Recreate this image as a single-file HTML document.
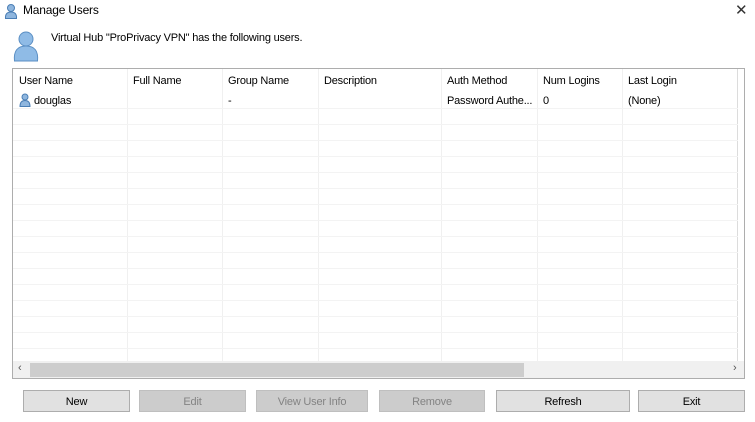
<!DOCTYPE html><html><head><style>
body{margin:0;width:755px;height:422px;background:#fff;font-family:"Liberation Sans",sans-serif;font-size:11px;color:#000;position:relative;overflow:hidden;letter-spacing:-0.2px}
.a{position:absolute}
.lv{left:12px;top:68px;width:731px;height:309px;border:1px solid #adadad;overflow:hidden}
.vl{position:absolute;top:0;height:292px;width:1px;background:#f0f0f0}
.hl{position:absolute;left:0;width:725px;height:1px;background:#f3f3f3}
.t{position:absolute;white-space:nowrap}
.b{position:absolute;top:390px;height:22px;border:1px solid #adadad;background:#e1e1e1;text-align:center;line-height:22px;box-sizing:border-box;font-size:11px}
.d{background:#cccccc;color:#838383;border-color:#bfbfbf}
</style></head><body>
<svg class="a" style="left:4px;top:3px" width="14" height="16" viewBox="0 0 14 16"><circle cx="7" cy="5" r="3.5" fill="#8fb6de" stroke="#4a7eb5"/><path d="M1.5 15.5 Q1 9 7 9 Q13 9 12.5 15.5Z" fill="#8fb6de" stroke="#4a7eb5"/></svg>
<div class="t" style="left:23px;top:3px;font-size:12px">Manage Users</div>
<div class="t" style="left:735px;top:1px;font-size:15px;color:#333">✕</div>
<svg class="a" style="left:13px;top:30px" width="26" height="32" viewBox="0 0 26 32"><circle cx="13" cy="9" r="7" fill="#8fbbe6" stroke="#5b8fc4"/><path d="M1.5 31 Q0 16 13 16 Q26 16 24.5 31Z" fill="#8fbbe6" stroke="#5b8fc4"/></svg>
<div class="t" style="left:51px;top:32px">Virtual Hub "ProPrivacy VPN" has the following users.</div>
<div class="a lv">
<div class="vl" style="left:114px"></div><div class="vl" style="left:209px"></div><div class="vl" style="left:305px"></div><div class="vl" style="left:428px"></div><div class="vl" style="left:524px"></div><div class="vl" style="left:609px"></div><div class="vl" style="left:724px;background:#dcdcdc"></div>
<div class="hl" style="top:39px"></div><div class="hl" style="top:55px"></div><div class="hl" style="top:71px"></div><div class="hl" style="top:87px"></div><div class="hl" style="top:103px"></div><div class="hl" style="top:119px"></div><div class="hl" style="top:135px"></div><div class="hl" style="top:151px"></div><div class="hl" style="top:167px"></div><div class="hl" style="top:183px"></div><div class="hl" style="top:199px"></div><div class="hl" style="top:215px"></div><div class="hl" style="top:231px"></div><div class="hl" style="top:247px"></div><div class="hl" style="top:263px"></div><div class="hl" style="top:279px"></div>
<div class="t" style="left:6px;top:6px">User Name</div><div class="t" style="left:120px;top:6px">Full Name</div><div class="t" style="left:215px;top:6px">Group Name</div><div class="t" style="left:311px;top:6px">Description</div><div class="t" style="left:434px;top:6px">Auth Method</div><div class="t" style="left:530px;top:6px">Num Logins</div><div class="t" style="left:615px;top:6px">Last Login</div>
<svg class="a" style="left:6px;top:24px" width="12" height="14" viewBox="0 0 12 14"><circle cx="6" cy="4" r="3" fill="#8fb6de" stroke="#4a7eb5"/><path d="M1 13.5 Q1 7.5 6 7.5 Q11 7.5 11 13.5Z" fill="#8fb6de" stroke="#4a7eb5"/></svg>
<div class="t" style="left:21px;top:26px">douglas</div><div class="t" style="left:215px;top:26px">-</div><div class="t" style="left:434px;top:26px">Password Authe...</div><div class="t" style="left:530px;top:26px">0</div><div class="t" style="left:615px;top:26px">(None)</div>
<div class="a" style="left:0;top:292px;width:731px;height:17px;background:#f0f0f0"></div>
<div class="a" style="left:17px;top:294px;width:494px;height:14px;background:#cdcdcd"></div>
<div class="t" style="left:5px;top:293px;font-size:11px;color:#555">‹</div><div class="t" style="left:720px;top:293px;font-size:11px;color:#555">›</div>
</div>
<div class="b" style="left:23px;width:107px">New</div>
<div class="b d" style="left:139px;width:107px">Edit</div>
<div class="b d" style="left:256px;width:112px">View User Info</div>
<div class="b d" style="left:379px;width:106px">Remove</div>
<div class="b" style="left:496px;width:134px">Refresh</div>
<div class="b" style="left:638px;width:107px">Exit</div>
</body></html>
